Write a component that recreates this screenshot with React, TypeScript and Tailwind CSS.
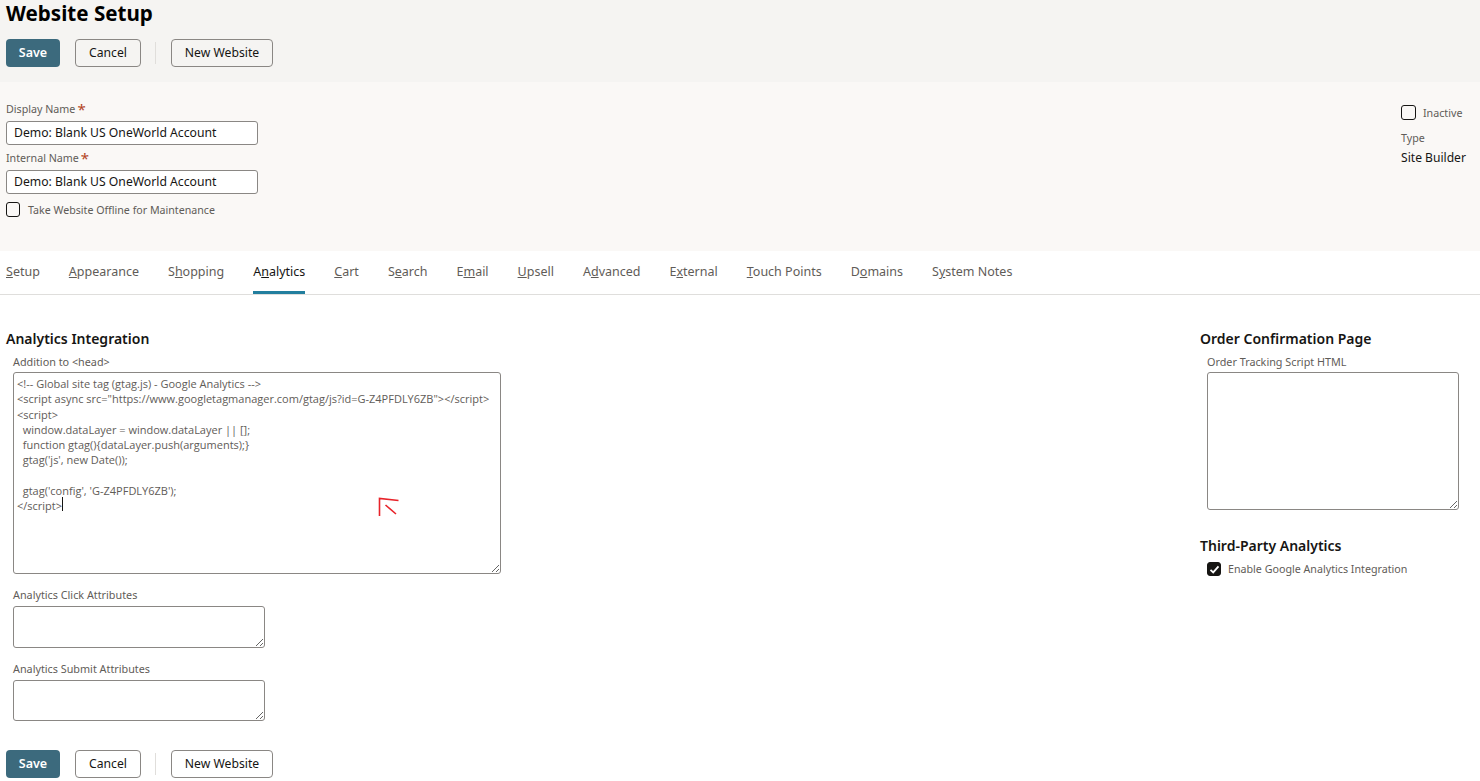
const code = `<!-- Global site tag (gtag.js) - Google Analytics -->
<script async src="https://www.googletagmanager.com/gtag/js?id=G-Z4PFDLY6ZB"></script>
<script>
  window.dataLayer = window.dataLayer || [];
  function gtag(){dataLayer.push(arguments);}
  gtag('js', new Date());

  gtag('config', 'G-Z4PFDLY6ZB');
</script>`;

function Buttons() {
  return (
    <div className="flex items-center h-7">
      <button className="w-[54px] h-7 pt-px rounded-[4px] bg-[#3c6a7d] text-white text-[12.5px] font-semibold">Save</button>
      <button className="ml-[15px] w-[66px] h-7 pt-px rounded-[4px] border border-[#8a8784] text-[#161513] text-[12.2px]">Cancel</button>
      <div className="ml-[14px] w-px h-[22px] bg-[#e0dedb]" />
      <button className="ml-[15px] w-[102px] h-7 pt-px rounded-[4px] border border-[#8a8784] text-[#161513] text-[12.2px]">New Website</button>
    </div>
  );
}

function Check({ checked, size }: { checked?: boolean; size: string }) {
  return (
    <span className={size + " rounded-[3px] border border-[#161513] flex items-center justify-center shrink-0 " + (checked ? "bg-[#161513]" : "")}>
      {checked && (
        <svg width="11" height="11" viewBox="0 0 11 11" fill="none">
          <path d="M1.5 5.8 L4.2 8.4 L9.5 2.4" stroke="white" strokeWidth="1.8" />
        </svg>
      )}
    </span>
  );
}

function Tab({ pre, u, post, active }: { pre: string; u: string; post: string; active?: boolean }) {
  return (
    <div className={"h-[43px] pt-[12px] text-[12.5px] leading-[18px] border-b-[3px] " + (active ? "border-[#227e9e] text-[#161513]" : "border-transparent text-[#5f5c58]")}>
      {pre}<u>{u}</u>{post}
    </div>
  );
}

const taClass = "block rounded-[3px] border border-[#8a8784] bg-white";

export default function App() {
  return (
    <div className="w-[1480px] h-[781px] overflow-hidden bg-white text-[#161513] font-['Noto_Sans','Open_Sans',sans-serif]">
      <div className="h-[82px] bg-[#f5f4f2] px-[6px]">
        <h1 className="text-[20.6px] font-bold leading-[27px] text-black">Website Setup</h1>
        <div className="pt-[12px]"><Buttons /></div>
      </div>

      <div className="h-[169px] bg-[#faf8f6] pl-[6px] pr-[14px] pt-[20px] flex justify-between">
        <div className="w-[252px]">
          <div className="text-[10.7px] leading-[15px] h-[19px] text-[#5f5c58] flex items-start">Display Name<span className="text-[#b3451f] text-[15px] leading-[14px] ml-[2px]">*</span></div>
          <div className="h-[24px] rounded-[3px] border border-[#8a8784] bg-white pl-[7px] text-[12.2px] leading-[22px]">Demo: Blank US OneWorld Account</div>
          <div className="mt-[6px] text-[10.7px] leading-[15px] h-[19px] text-[#5f5c58] flex items-start">Internal Name<span className="text-[#b3451f] text-[15px] leading-[14px] ml-[2px]">*</span></div>
          <div className="h-[24px] rounded-[3px] border border-[#8a8784] bg-white pl-[7px] text-[12.2px] leading-[22px]">Demo: Blank US OneWorld Account</div>
          <div className="mt-[8px] flex items-center gap-[8px] whitespace-nowrap"><Check size="w-[14px] h-[15px]" /><span className="text-[10.65px] leading-[14px] text-[#5f5c58]">Take Website Offline for Maintenance</span></div>
        </div>
        <div className="w-[65px] pt-[3px]">
          <div className="flex items-center gap-[7px]"><Check size="w-[15px] h-[15px]" /><span className="text-[10.7px] leading-[14px] text-[#5f5c58]">Inactive</span></div>
          <div className="mt-[11px] text-[10.7px] leading-[15px] text-[#5f5c58]">Type</div>
          <div className="mt-[3px] text-[12.1px] leading-[18px] whitespace-nowrap">Site Builder</div>
        </div>
      </div>

      <div className="h-[44px] border-b border-[#dfdedc] px-[6px] flex gap-[29px] items-start">
        <Tab pre="" u="S" post="etup" />
        <Tab pre="" u="A" post="ppearance" />
        <Tab pre="S" u="h" post="opping" />
        <Tab pre="A" u="n" post="alytics" active />
        <Tab pre="" u="C" post="art" />
        <Tab pre="S" u="e" post="arch" />
        <Tab pre="E" u="m" post="ail" />
        <Tab pre="" u="U" post="psell" />
        <Tab pre="A" u="d" post="vanced" />
        <Tab pre="E" u="x" post="ternal" />
        <Tab pre="" u="T" post="ouch Points" />
        <Tab pre="D" u="o" post="mains" />
        <Tab pre="S" u="y" post="stem Notes" />
      </div>

      <div className="flex justify-between pl-[6px] pr-[21px] pt-[34px]">
        <div>
          <h2 className="text-[14px] font-semibold leading-[20px]">Analytics Integration</h2>
          <div className="pl-[7px] pt-[5px]">
            <div className="text-[10.8px] leading-[15px] h-[18px] text-[#5f5c58]">Addition to &lt;head&gt;</div>
            <div className="relative w-[488px] h-[202px]">
              <textarea
                readOnly
                defaultValue={code}
                className={taClass + " w-[488px] h-[202px] pl-[3px] pr-[2px] pt-[3px] text-[11px] leading-[15.3px] text-[#5f5c58] overflow-hidden font-['Open_Sans',sans-serif] outline-none"}
              />
              <div className="absolute left-[49px] top-[125px] w-px h-[14px] bg-[#161513]" />
              <svg className="absolute left-[364px] top-[124px]" width="24" height="22" viewBox="0 0 24 22" fill="none">
                <path d="M2.5 20 L2.5 2.5 L21.5 4.5 M8.5 9 L19 18" stroke="#e8232a" strokeWidth="1.6" />
              </svg>
            </div>
            <div className="mt-[13px] text-[10.8px] leading-[15px] h-[19px] text-[#5f5c58]">Analytics Click Attributes</div>
            <textarea readOnly className={taClass + " w-[252px] h-[42px]"} />
            <div className="mt-[13px] text-[10.8px] leading-[15px] h-[19px] text-[#5f5c58]">Analytics Submit Attributes</div>
            <textarea readOnly className={taClass + " w-[252px] h-[41px]"} />
          </div>
          <div className="pt-[29px]"><Buttons /></div>
        </div>
        <div className="w-[259px]">
          <h2 className="text-[14px] font-semibold leading-[20px]">Order Confirmation Page</h2>
          <div className="pl-[7px] pt-[5px]">
            <div className="text-[10.8px] leading-[15px] h-[18px] text-[#5f5c58]">Order Tracking Script HTML</div>
            <textarea readOnly className={taClass + " w-[252px] h-[138px]"} />
          </div>
          <h2 className="mt-[26px] text-[14px] font-semibold leading-[20px]">Third-Party Analytics</h2>
          <div className="pl-[7px] pt-[6px] flex items-center gap-[7px]"><Check checked size="w-[14px] h-[14px]" /><span className="text-[10.7px] leading-[14px] text-[#5f5c58]">Enable Google Analytics Integration</span></div>
        </div>
      </div>
    </div>
  );
}
